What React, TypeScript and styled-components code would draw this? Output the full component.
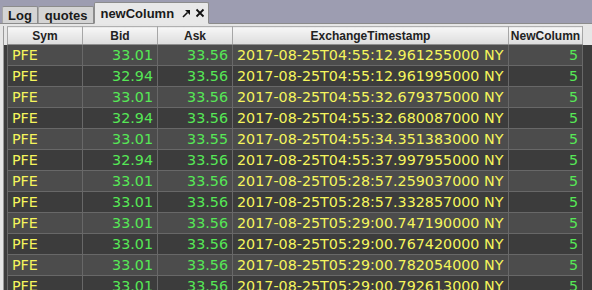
import styled, { createGlobalStyle } from 'styled-components';

type Quote = { sym: string; bid: string; ask: string; ts: string; newColumn: number };

const QUOTES: Quote[] = [
  { sym: 'PFE', bid: '33.01', ask: '33.56', ts: '2017-08-25T04:55:12.961255000 NY', newColumn: 5 },
  { sym: 'PFE', bid: '32.94', ask: '33.56', ts: '2017-08-25T04:55:12.961995000 NY', newColumn: 5 },
  { sym: 'PFE', bid: '33.01', ask: '33.56', ts: '2017-08-25T04:55:32.679375000 NY', newColumn: 5 },
  { sym: 'PFE', bid: '32.94', ask: '33.56', ts: '2017-08-25T04:55:32.680087000 NY', newColumn: 5 },
  { sym: 'PFE', bid: '33.01', ask: '33.55', ts: '2017-08-25T04:55:34.351383000 NY', newColumn: 5 },
  { sym: 'PFE', bid: '32.94', ask: '33.56', ts: '2017-08-25T04:55:37.997955000 NY', newColumn: 5 },
  { sym: 'PFE', bid: '33.01', ask: '33.56', ts: '2017-08-25T05:28:57.259037000 NY', newColumn: 5 },
  { sym: 'PFE', bid: '33.01', ask: '33.56', ts: '2017-08-25T05:28:57.332857000 NY', newColumn: 5 },
  { sym: 'PFE', bid: '33.01', ask: '33.56', ts: '2017-08-25T05:29:00.747190000 NY', newColumn: 5 },
  { sym: 'PFE', bid: '33.01', ask: '33.56', ts: '2017-08-25T05:29:00.767420000 NY', newColumn: 5 },
  { sym: 'PFE', bid: '33.01', ask: '33.56', ts: '2017-08-25T05:29:00.782054000 NY', newColumn: 5 },
  { sym: 'PFE', bid: '33.01', ask: '33.56', ts: '2017-08-25T05:29:00.792613000 NY', newColumn: 5 },
];

const COLUMNS = [
  { title: 'Sym', width: 75 },
  { title: 'Bid', width: 75 },
  { title: 'Ask', width: 75 },
  { title: 'ExchangeTimestamp', width: 276 },
  { title: 'NewColumn', width: 74 },
];

const YELLOW = '#f5f55c';
const GREEN = '#56e856';

export default function App() {
  return (
    <>
      <GlobalStyle />
      <Frame>
        <TabBar>
          <Tab>Log</Tab>
          <Tab $wide>quotes</Tab>
          <Tab $active>
            newColumn
            <TabIcons>
              <svg width="9" height="9" viewBox="0 0 9 9">
                <path d="M1 8 L5.5 3.5" stroke="#111" strokeWidth="1.6" />
                <path d="M3 1 H8 V6 Z" fill="#111" />
              </svg>
              <svg width="10" height="10" viewBox="0 0 10 10">
                <path d="M1.5 1.5 L8.5 8.5 M8.5 1.5 L1.5 8.5" stroke="#111" strokeWidth="1.8" />
              </svg>
            </TabIcons>
          </Tab>
        </TabBar>
        <Panel>
          <Viewport>
            <Grid>
              <colgroup>
                {COLUMNS.map((c) => (
                  <col key={c.title} style={{ width: c.width }} />
                ))}
              </colgroup>
              <thead>
                <tr>
                  {COLUMNS.map((c) => (
                    <HeadCell key={c.title}>{c.title}</HeadCell>
                  ))}
                </tr>
              </thead>
              <tbody>
                {QUOTES.map((q, i) => (
                  <Row key={i} $odd={i % 2 === 1}>
                    <Cell $color={YELLOW}>{q.sym}</Cell>
                    <Cell $color={GREEN} $right>{q.bid}</Cell>
                    <Cell $color={GREEN} $right>{q.ask}</Cell>
                    <Cell $color={YELLOW}>{q.ts}</Cell>
                    <Cell $color={GREEN} $right>{q.newColumn}</Cell>
                  </Row>
                ))}
              </tbody>
            </Grid>
          </Viewport>
        </Panel>
      </Frame>
    </>
  );
}

const GlobalStyle = createGlobalStyle`
  html, body {
    margin: 0;
    padding: 0;
    background: #9d9db1;
    overflow: hidden;
  }
`;

// ROOT
const Frame = styled.div`
  width: 592px;
  height: 290px;
  display: flex;
  flex-direction: column;
  overflow: hidden;
`;

// TABS
const TabBar = styled.div`
  height: 24px;
  display: flex;
  align-items: flex-end;
  padding-left: 2px;
  border-bottom: 1px solid #8c8c8c;
  box-sizing: border-box;
  position: relative;
  z-index: 1;
`;

const Tab = styled.div<{ $active?: boolean; $wide?: boolean }>`
  height: ${(p) => (p.$active ? '22px' : '17px')};
  margin-bottom: ${(p) => (p.$active ? '-1px' : '0')};
  padding: 0 ${(p) => (p.$wide ? '6px' : '5px')};
  display: flex;
  align-items: center;
  box-sizing: border-box;
  background: ${(p) => (p.$active ? '#e8e8e8' : '#d4d4d4')};
  border: 1px solid #8c8c8c;
  border-bottom: ${(p) => (p.$active ? '1px solid #e8e8e8' : 'none')};
  border-left: ${(p) => (p.$active ? '1px solid #8c8c8c' : '1px solid #a8a8a8')};
  border-radius: 2px 2px 0 0;
  font-family: 'Liberation Sans', Arial, sans-serif;
  font-weight: bold;
  font-size: 13px;
  color: #1a1a1a;
`;

const TabIcons = styled.span`
  display: flex;
  align-items: center;
  gap: 4px;
  margin-left: 8px;
  margin-right: -2px;
`;

// TABLE
const Panel = styled.div`
  flex: 1;
  background: #e6e6e6;
  padding: 2px 0 0 3px;
  display: flex;
  min-height: 0;
`;

const Viewport = styled.div`
  flex: 1;
  border-left: 1px solid #9a9a9a;
  padding: 0 0 0 3px;
  background: linear-gradient(#e6e6e6 0 19px, #3c3c3c 19px);
  overflow: hidden;
`;

const Grid = styled.table`
  border-collapse: collapse;
  table-layout: fixed;
  width: 575px;
`;

const HeadCell = styled.th`
  height: 18px;
  padding: 0;
  background: linear-gradient(#f7f7f7, #dcdcdc);
  border-top: 1px solid #b0b0b0;
  border-bottom: 1px solid #8e8e8e;
  border-right: 1px solid #a6a6a6;
  border-left: 1px solid #a6a6a6;
  font-family: 'Liberation Sans', Arial, sans-serif;
  font-weight: bold;
  font-size: 12px;
  color: #222;
  text-align: center;
  box-sizing: border-box;
`;

const Row = styled.tr<{ $odd: boolean }>`
  background: ${(p) => (p.$odd ? '#3c3c3c' : '#4c4c4c')};
`;

const Cell = styled.td<{ $color: string; $right?: boolean }>`
  height: 20px;
  padding: 0 4px;
  border: 1px solid #686868;
  border-top: 0;
  font-family: 'DejaVu Sans', 'Liberation Sans', sans-serif;
  font-size: 14.3px;
  line-height: 20px;
  color: ${(p) => p.$color};
  text-align: ${(p) => (p.$right ? 'right' : 'left')};
  white-space: nowrap;
  overflow: hidden;
`;
